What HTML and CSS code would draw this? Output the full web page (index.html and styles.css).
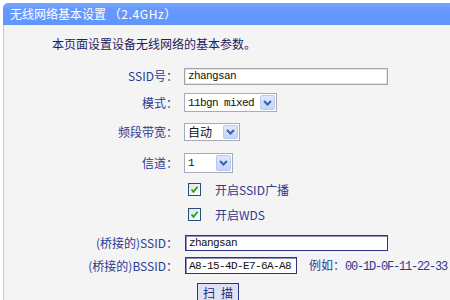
FILE: index.html
```html
<!DOCTYPE html>
<html lang="zh-CN">
<head>
<meta charset="utf-8">
<title>无线网络基本设置</title>
<link rel="stylesheet" href="styles.css">
</head>
<body>
<div class="panel">
  <div class="header">无线网络基本设置 <span class="hdr-sub">（2.4GHz）</span></div>
  <div class="content">
    <p class="intro">本页面设置设备无线网络的基本参数。</p>
    <div class="form">
      <label class="lbl">SSID号：</label>
      <div class="field"><span class="input input-ssid">zhangsan</span></div>

      <label class="lbl">模式：</label>
      <div class="field">
        <span class="select sel-mode"><span class="sel-text mono">11bgn mixed</span><span class="sel-btn"><svg width="9" height="6" viewBox="0 0 9 6"><path d="M1 1 L4.5 4.5 L8 1" fill="none" stroke="#3b5fae" stroke-width="2"/></svg></span></span>
      </div>

      <label class="lbl">频段带宽：</label>
      <div class="field">
        <span class="select sel-band"><span class="sel-text">自动</span><span class="sel-btn"><svg width="9" height="6" viewBox="0 0 9 6"><path d="M1 1 L4.5 4.5 L8 1" fill="none" stroke="#3b5fae" stroke-width="2"/></svg></span></span>
      </div>

      <label class="lbl">信道：</label>
      <div class="field">
        <span class="select sel-chan"><span class="sel-text mono">1</span><span class="sel-btn"><svg width="9" height="6" viewBox="0 0 9 6"><path d="M1 1 L4.5 4.5 L8 1" fill="none" stroke="#3b5fae" stroke-width="2"/></svg></span></span>
      </div>

      <span class="lbl"></span>
      <div class="field check-field">
        <span class="checkbox"><svg width="9" height="9" viewBox="0 0 9 9"><path d="M1.5 4.5 L3.5 6.8 L7.6 1.8" fill="none" stroke="#22a022" stroke-width="1.8"/></svg></span>
        <span class="check-text">开启SSID广播</span>
      </div>

      <span class="lbl"></span>
      <div class="field check-field">
        <span class="checkbox"><svg width="9" height="9" viewBox="0 0 9 9"><path d="M1.5 4.5 L3.5 6.8 L7.6 1.8" fill="none" stroke="#22a022" stroke-width="1.8"/></svg></span>
        <span class="check-text">开启WDS</span>
      </div>

      <label class="lbl">(桥接的)SSID：</label>
      <div class="field"><span class="input input-dark input-bridge">zhangsan</span></div>

      <label class="lbl">(桥接的)BSSID：</label>
      <div class="field">
        <span class="input input-dark input-bssid">A8-15-4D-E7-6A-A8</span>
        <span class="example">例如：<span class="mono-ex">00-1D-0F-11-22-33</span></span>
      </div>

      <span class="lbl"></span>
      <div class="field btn-field"><span class="button"><span>扫</span><span>描</span></span></div>
    </div>
  </div>
</div>
</body>
</html>
```

FILE: styles.css
```css
html, body {
  margin: 0;
  padding: 0;
  background: #ffffff;
  font-family: "Noto Sans CJK SC", "DejaVu Sans", sans-serif;
  font-size: 12px;
  width: 450px;
  height: 300px;
  overflow: hidden;
}

.panel {
  margin: 3px 0 0 3px;
}

.header {
  height: 22px;
  line-height: 22px;
  background: linear-gradient(#79a6fb, #6699ff 30%, #6396fb);
  border-top-left-radius: 5px;
  color: #ffffff;
  padding-left: 7px;
  font-size: 12px;
}

.hdr-sub {
  letter-spacing: 0.6px;
}

.content {
  background: #f4f4f4;
  border-left: 1px solid #f3c27c;
  height: 280px;
}

.intro {
  margin: 0;
  height: 38px;
  line-height: 38px;
  padding-left: 48px;
  color: #1f2060;
  font-size: 12px;
}

.form {
  display: grid;
  grid-template-columns: 174px auto;
  grid-template-rows: 26px 27px 31px 31px 23px 27px 29px 17px auto;
  column-gap: 6px;
  align-items: center;
}

.lbl {
  text-align: right;
  color: #2b3a92;
  line-height: 14px;
  white-space: nowrap;
}

.field {
  display: flex;
  align-items: center;
}

.mono, .input {
  font-family: "Liberation Mono", "DejaVu Sans Mono", monospace;
  font-size: 11px;
  letter-spacing: -0.6px;
}

.mono-ex {
  font-family: "Liberation Mono", "DejaVu Sans Mono", monospace;
  font-size: 12px;
  letter-spacing: -1.2px;
  color: #2b3a92;
}

.input {
  box-sizing: border-box;
  display: flex;
  align-items: center;
  background: #ffffff;
  color: #111111;
  padding-left: 3px;
}

.input-ssid {
  width: 204px;
  height: 17px;
  border: 1px solid #a3a3a3;
  box-shadow: inset 0 0 0 1px #e6e6e6;
}

.input-dark {
  border: 1px solid #2f3383;
  box-shadow: inset 1px 1px 0 #8c8fbf;
}

.input-bridge {
  width: 203px;
  height: 16px;
  margin-left: 1px;
}

.input-bssid {
  width: 112px;
  height: 17px;
  margin-left: 1px;
}

.example {
  margin-left: 12px;
  color: #2b3a92;
  line-height: 14px;
  white-space: nowrap;
}

.select {
  box-sizing: border-box;
  display: flex;
  align-items: center;
  justify-content: space-between;
  background: #ffffff;
  border: 1px solid #a6adb8;
  padding: 1px 1px 1px 3px;
  color: #111111;
}

.sel-text {
  line-height: 14px;
}

.sel-mode { width: 93px; height: 19px; }
.sel-band { width: 56px; height: 18px; }
.sel-chan { width: 49px; height: 20px; }

.sel-btn {
  box-sizing: border-box;
  width: 15px;
  height: 100%;
  display: flex;
  align-items: center;
  justify-content: center;
  background: linear-gradient(#dfe8fc, #c4d5f8);
  border: 1px solid #b9c9ef;
  border-radius: 2px;
}

.check-field {
  padding-left: 4px;
}

.checkbox {
  box-sizing: border-box;
  width: 13px;
  height: 13px;
  border: 1px solid #1d5281;
  background: linear-gradient(135deg, #e3e3de, #ffffff);
  display: flex;
  align-items: center;
  justify-content: center;
}

.check-text {
  margin-left: 14px;
  color: #2b3a92;
  line-height: 14px;
}

.btn-field {
  padding-top: 9px;
  padding-left: 13px;
}

.button {
  box-sizing: border-box;
  width: 42px;
  height: 19px;
  display: flex;
  align-items: center;
  justify-content: center;
  gap: 6px;
  background: #dde1f3;
  border: 1px solid #2f3383;
  color: #1f2a7a;
  line-height: 14px;
}
```
